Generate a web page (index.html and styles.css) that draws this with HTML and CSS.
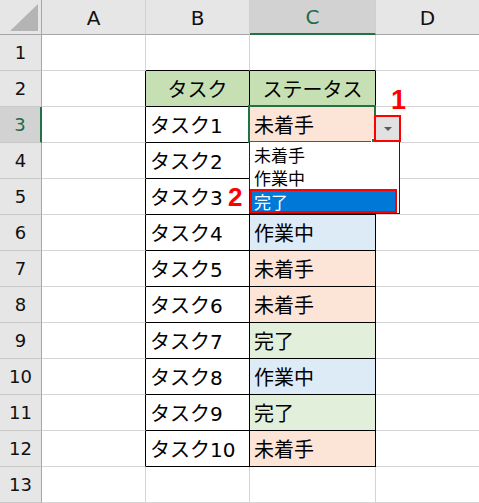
FILE: index.html
```html
<!DOCTYPE html>
<html lang="ja">
<head>
<meta charset="utf-8">
<link rel="stylesheet" href="styles.css">
</head>
<body>
<div class="sheet">
  <div class="grid">
    <div class="corner"><span class="tri"></span></div>
    <div class="ch">A</div>
    <div class="ch">B</div>
    <div class="ch sel-h">C</div>
    <div class="ch">D</div>

    <div class="rh">1</div>
    <div class="c"></div>
    <div class="c bk-b"></div>
    <div class="c bk-b"></div>
    <div class="c"></div>

    <div class="rh">2</div>
    <div class="c bk-r"></div>
    <div class="c tb hdr center">タスク</div>
    <div class="c tb hdr center">ステータス</div>
    <div class="c"></div>

    <div class="rh sel-r">3</div>
    <div class="c bk-r"></div>
    <div class="c tb">タスク1</div>
    <div class="c tb p">未着手</div>
    <div class="c"></div>

    <div class="rh">4</div>
    <div class="c bk-r"></div>
    <div class="c tb">タスク2</div>
    <div class="c tb"></div>
    <div class="c"></div>

    <div class="rh">5</div>
    <div class="c bk-r"></div>
    <div class="c tb">タスク3</div>
    <div class="c tb"></div>
    <div class="c"></div>

    <div class="rh">6</div>
    <div class="c bk-r"></div>
    <div class="c tb">タスク4</div>
    <div class="c tb bl">作業中</div>
    <div class="c"></div>

    <div class="rh">7</div>
    <div class="c bk-r"></div>
    <div class="c tb">タスク5</div>
    <div class="c tb p">未着手</div>
    <div class="c"></div>

    <div class="rh">8</div>
    <div class="c bk-r"></div>
    <div class="c tb">タスク6</div>
    <div class="c tb p">未着手</div>
    <div class="c"></div>

    <div class="rh">9</div>
    <div class="c bk-r"></div>
    <div class="c tb">タスク7</div>
    <div class="c tb g">完了</div>
    <div class="c"></div>

    <div class="rh">10</div>
    <div class="c bk-r"></div>
    <div class="c tb">タスク8</div>
    <div class="c tb bl">作業中</div>
    <div class="c"></div>

    <div class="rh">11</div>
    <div class="c bk-r"></div>
    <div class="c tb">タスク9</div>
    <div class="c tb g">完了</div>
    <div class="c"></div>

    <div class="rh">12</div>
    <div class="c bk-r"></div>
    <div class="c tb">タスク10</div>
    <div class="c tb p">未着手</div>
    <div class="c"></div>

    <div class="rh">13</div>
    <div class="c"></div>
    <div class="c"></div>
    <div class="c"></div>
    <div class="c"></div>
  </div>

  <div class="selection"></div>
  <div class="handle"></div>
  <div class="dd-btn"><span class="arrow"></span></div>
  <div class="dd-list">
    <div class="dd-item">未着手</div>
    <div class="dd-item">作業中</div>
    <div class="dd-item active">完了</div>
  </div>
  <div class="label label1">1</div>
  <div class="label label2">2</div>
</div>
</body>
</html>
```

FILE: styles.css
```css
* { box-sizing: border-box; }
html, body {
  margin: 0;
  padding: 0;
  background: #ffffff;
}
body {
  font-family: "DejaVu Sans", "Noto Sans CJK JP", sans-serif;
  color: #000;
  overflow: hidden;
}
.sheet {
  position: relative;
  width: 479px;
  height: 503px;
  overflow: hidden;
}
.grid {
  display: grid;
  grid-template-columns: 42px 104px 104px 126px 104px;
  grid-template-rows: 35px repeat(13, 36px);
  width: 480px;
}
.corner {
  position: relative;
  background: #e6e6e6;
  border-right: 1px solid #a6a6a6;
  border-bottom: 1px solid #a6a6a6;
}
.tri {
  position: absolute;
  left: 10px;
  top: 4px;
  width: 28px;
  height: 27px;
  background: #b4b4b4;
  clip-path: polygon(100% 0, 100% 100%, 0 100%);
}
.ch {
  background: #e6e6e6;
  border-right: 1px solid #d0d0d0;
  border-bottom: 1px solid #a6a6a6;
  display: flex;
  align-items: center;
  justify-content: center;
  font-family: "DejaVu Sans", "Noto Sans CJK JP", sans-serif;
  font-size: 20px;
  color: #111;
  padding-top: 1px;
}
.ch.sel-h {
  background: #d2d2d2;
  color: #1e6b47;
  border-bottom: 2px solid #217346;
}
.rh {
  background: #e6e6e6;
  border-right: 1px solid #a6a6a6;
  border-bottom: 1px solid #c8c8c8;
  display: flex;
  align-items: center;
  justify-content: center;
  font-family: "DejaVu Sans", "Noto Sans CJK JP", sans-serif;
  font-size: 18px;
  color: #111;
}
.rh.sel-r {
  background: #d2d2d2;
  color: #1e6b47;
  border-right: 2px solid #217346;
}
.c {
  border-right: 1px solid #d4d4d4;
  border-bottom: 1px solid #d4d4d4;
  display: flex;
  align-items: center;
  padding-left: 4px;
  font-size: 20px;
  white-space: nowrap;
  overflow: hidden;
}
.c.center { justify-content: center; padding-left: 0; }
.c.bk-r { border-right-color: #000; }
.c.bk-b { border-bottom-color: #000; }
.c.tb {
  border-right-color: #000;
  border-bottom-color: #000;
}
.hdr { background: #c6e0b4; }
.p { background: #fce4d6; }
.bl { background: #ddebf7; }
.g { background: #e2efda; }

.selection {
  position: absolute;
  left: 248px;
  top: 105px;
  width: 128px;
  height: 38px;
  border: 2px solid #217346;
}
.handle {
  position: absolute;
  left: 371px;
  top: 138px;
  width: 7px;
  height: 7px;
  background: #217346;
  border: 1px solid #fff;
}
.dd-btn {
  position: absolute;
  left: 374px;
  top: 115px;
  width: 27px;
  height: 27px;
  border: 2px solid #ff0000;
  background: #e1e1e1;
  display: flex;
  align-items: center;
  justify-content: center;
}
.arrow {
  width: 0;
  height: 0;
  border-left: 4px solid transparent;
  border-right: 4px solid transparent;
  border-top: 4px solid #5a5a5a;
}
.dd-list {
  position: absolute;
  left: 249px;
  top: 142px;
  width: 151px;
  height: 72px;
  background: #fff;
  border: 1px solid #222;
  border-top: none;
  padding-top: 1px;
}
.dd-item {
  height: 23px;
  display: flex;
  align-items: center;
  padding-left: 4px;
  font-family: "Noto Sans CJK JP", sans-serif;
  font-size: 17px;
  line-height: 1;
}
.dd-item.active {
  margin-right: 2px;
  height: 24px;
  background: #0078d7;
  color: #fff;
  border: 2px solid #ff0000;
  padding-left: 2px;
}
.label {
  position: absolute;
  font-family: "Liberation Sans", Arial, sans-serif;
  font-weight: bold;
  color: #ff0000;
  line-height: 1;
}
.label1 {
  left: 391px;
  top: 87px;
  font-size: 27px;
}
.label2 {
  left: 228px;
  top: 184px;
  font-size: 26px;
}
```
